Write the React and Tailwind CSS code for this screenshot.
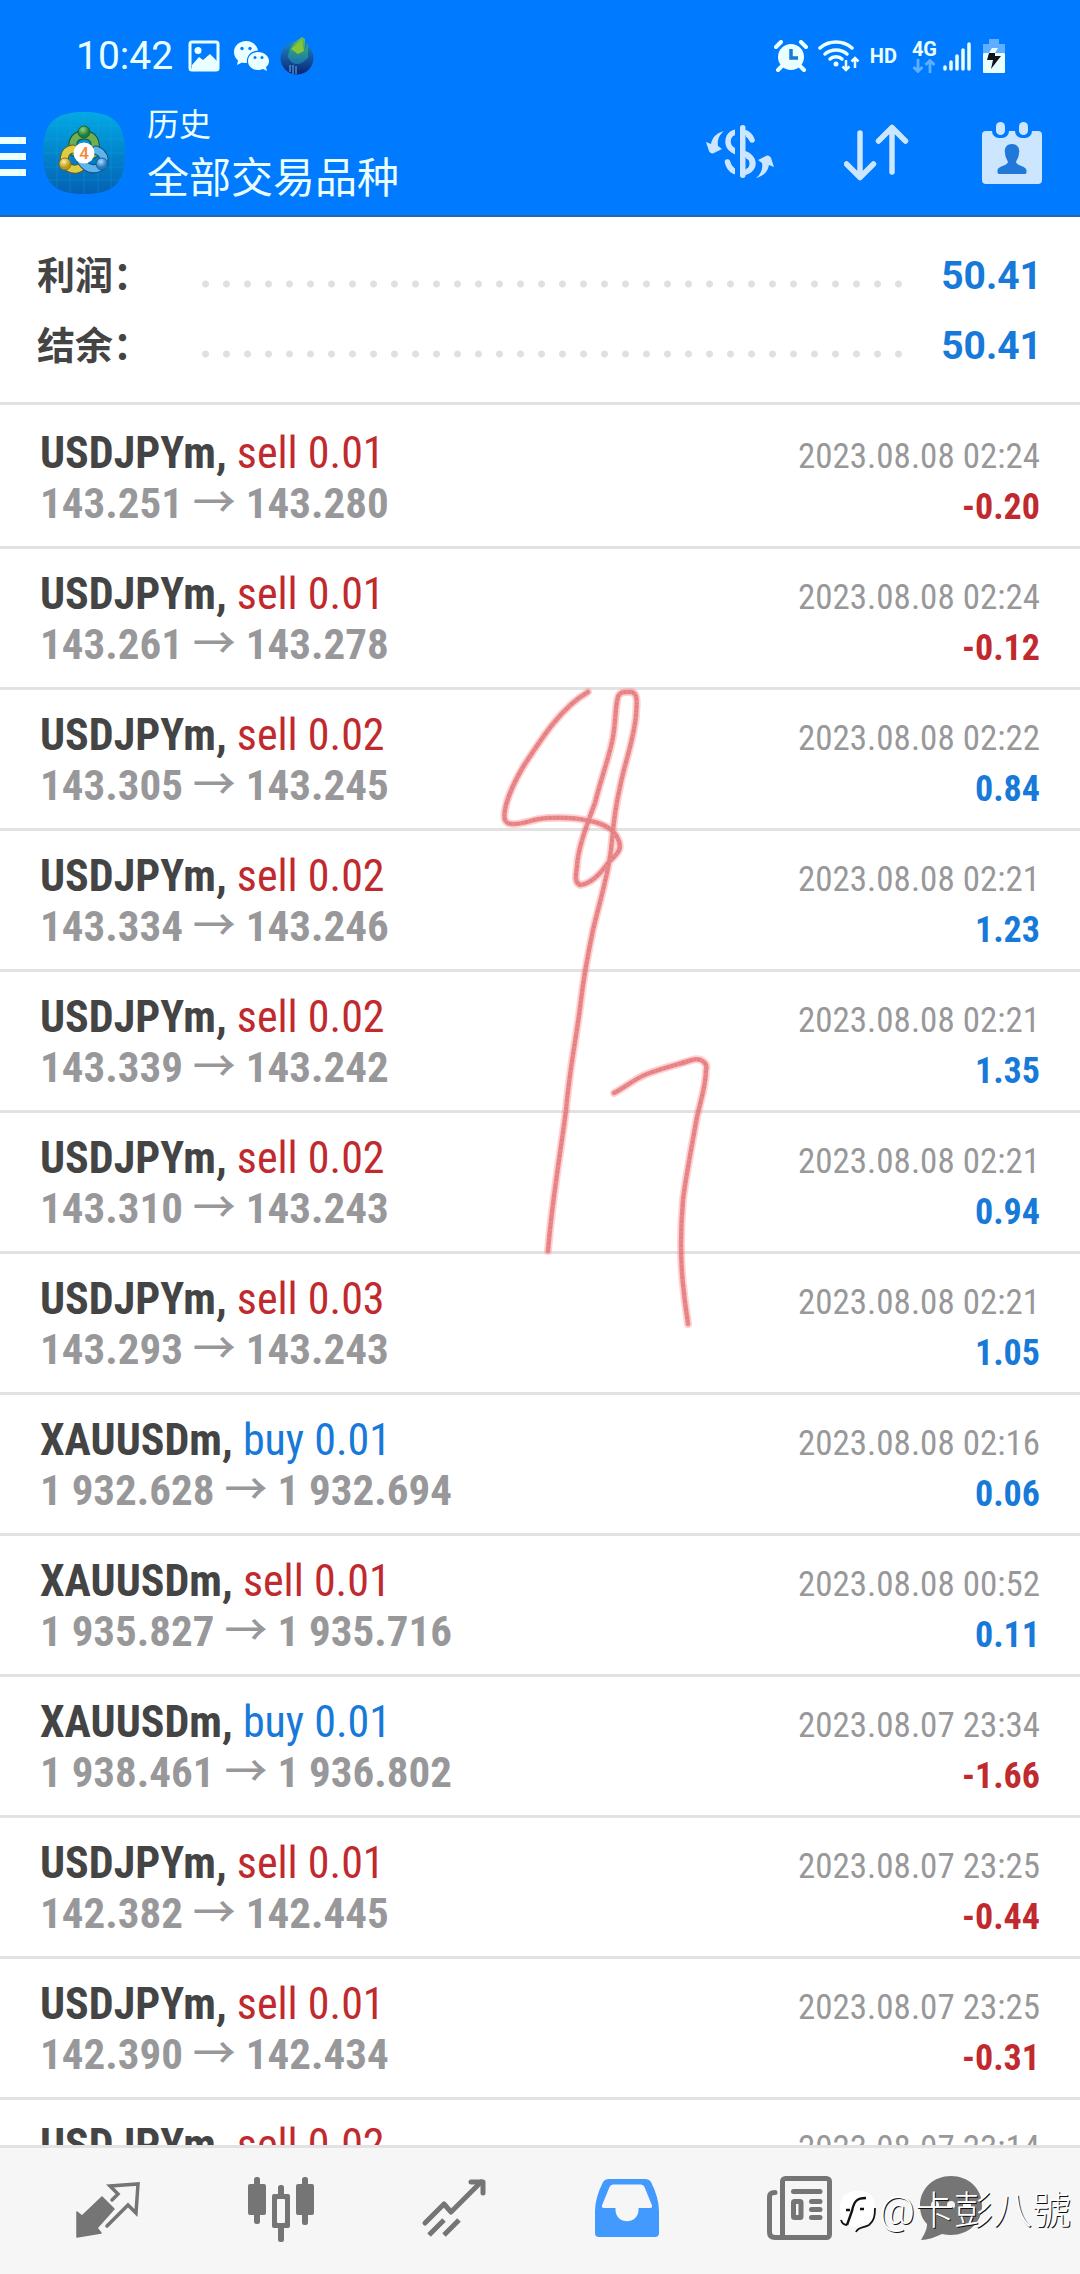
const deals = [
  { symbol: "USDJPYm", side: "sell", lots: "0.01", open: "143.251", close: "143.280", time: "2023.08.08 02:24", profit: "-0.20" },
  { symbol: "USDJPYm", side: "sell", lots: "0.01", open: "143.261", close: "143.278", time: "2023.08.08 02:24", profit: "-0.12" },
  { symbol: "USDJPYm", side: "sell", lots: "0.02", open: "143.305", close: "143.245", time: "2023.08.08 02:22", profit: "0.84" },
  { symbol: "USDJPYm", side: "sell", lots: "0.02", open: "143.334", close: "143.246", time: "2023.08.08 02:21", profit: "1.23" },
  { symbol: "USDJPYm", side: "sell", lots: "0.02", open: "143.339", close: "143.242", time: "2023.08.08 02:21", profit: "1.35" },
  { symbol: "USDJPYm", side: "sell", lots: "0.02", open: "143.310", close: "143.243", time: "2023.08.08 02:21", profit: "0.94" },
  { symbol: "USDJPYm", side: "sell", lots: "0.03", open: "143.293", close: "143.243", time: "2023.08.08 02:21", profit: "1.05" },
  { symbol: "XAUUSDm", side: "buy", lots: "0.01", open: "1 932.628", close: "1 932.694", time: "2023.08.08 02:16", profit: "0.06" },
  { symbol: "XAUUSDm", side: "sell", lots: "0.01", open: "1 935.827", close: "1 935.716", time: "2023.08.08 00:52", profit: "0.11" },
  { symbol: "XAUUSDm", side: "buy", lots: "0.01", open: "1 938.461", close: "1 936.802", time: "2023.08.07 23:34", profit: "-1.66" },
  { symbol: "USDJPYm", side: "sell", lots: "0.01", open: "142.382", close: "142.445", time: "2023.08.07 23:25", profit: "-0.44" },
  { symbol: "USDJPYm", side: "sell", lots: "0.01", open: "142.390", close: "142.434", time: "2023.08.07 23:25", profit: "-0.31" },
  { symbol: "USDJPYm", side: "sell", lots: "0.02", time: "2023.08.07 23:14" },
];

const totals = [
  { label: "利润：", value: "50.41" },
  { label: "结余：", value: "50.41" },
];

function StatusBar() {
  return (
    <div className="flex h-10 items-center pl-[76px] pr-[75px] text-[#eaffff]">
      <span className="text-[39px] leading-10">10:42</span>
      <svg className="ml-[15px] h-8 w-8" viewBox="0 0 32 32">
        <rect x="2" y="2" width="28" height="28" rx="2" fill="none" stroke="currentColor" strokeWidth="3" />
        <circle cx="10" cy="10.500" r="3.500" fill="currentColor" />
        <path d="M4 25 L11 17 L15 20 L22 14 L29 21 V29 H4Z" fill="currentColor" />
      </svg>
      <svg className="ml-[13px] h-8 w-9" viewBox="0 0 36 32">
        <path d="M13 1 C6 1 1 6 1 12 C1 16 3 19 5 20.500 L4 25 L9 22.500 C10 23 12 23 14 23 C13 16 18 10.500 25 10.500 C24 5 19 1 13 1Z" fill="currentColor" />
        <path d="M25 12 C19 12 15 16 15 21 C15 26 19 30 25 30 C27 30 28.500 29.500 30 29 L34 31 L33 27 C35 25.500 36 23.500 36 21 C36 16 31 12 25 12Z" fill="currentColor" />
        <g fill="#007aff">
          <circle cx="9" cy="8.500" r="1.700" />
          <circle cx="17" cy="8.500" r="1.700" />
          <circle cx="22" cy="17.500" r="1.500" />
          <circle cx="29" cy="17.500" r="1.500" />
        </g>
      </svg>
      <svg className="ml-[10px] h-[38px] w-9" viewBox="0 0 36 38">
        <defs>
          <linearGradient id="globe" x1="0" y1="0" x2="0" y2="1">
            <stop offset="0" stopColor="#1c8dc0" />
            <stop offset="0.5" stopColor="#15569f" />
            <stop offset="1" stopColor="#0a2472" />
          </linearGradient>
          <linearGradient id="leaf" x1="0" y1="0" x2="0" y2="1">
            <stop offset="0" stopColor="#6fbf4a" />
            <stop offset="0.5" stopColor="#2a9a88" />
            <stop offset="1" stopColor="#1b6fb0" />
          </linearGradient>
        </defs>
        <circle cx="18" cy="21" r="16.500" fill="url(#globe)" />
        <path d="M23 0 C15 5 10 10 9 20 C12 27 18 29 24 25 L29 21 V6 L26 13 V2Z" fill="url(#leaf)" />
        <path d="M23 2 L12 12 L19 17 L25 14Z" fill="#85c536" />
        <path d="M11 28 V35 M14 28 V37 M17 29 V37" stroke="#6cb3ee" strokeWidth="1" />
      </svg>

      <svg className="ml-auto h-8 w-[34px]" viewBox="0 0 34 32">
        <circle cx="17" cy="17" r="13" fill="currentColor" />
        <path d="M2 7 L7 2 M32 7 L27 2" stroke="currentColor" strokeWidth="4" strokeLinecap="round" />
        <path d="M8 26 L4 30 M26 26 L30 30" stroke="currentColor" strokeWidth="4" strokeLinecap="round" />
        <path d="M17 9 V18 H24" fill="none" stroke="#1779d8" strokeWidth="3.500" />
      </svg>
      <svg className="ml-[10px] h-8 w-[42px]" viewBox="0 0 42 32">
        <g fill="none" stroke="currentColor" strokeWidth="3.500" strokeLinecap="round">
          <path d="M2 8 C11 0 25 0 34 8" />
          <path d="M7 14 C13 8.500 23 8.500 29 14" />
          <path d="M12 19 C15 16 21 16 24 19" />
        </g>
        <circle cx="18" cy="24" r="2.500" fill="currentColor" />
        <path d="M28 20 V30 M24.500 26.500 L28 30 L31.500 26.500 M37 28 V18 M33.500 21.500 L37 18 L40.500 21.500" fill="none" stroke="currentColor" strokeWidth="2.500" />
      </svg>
      <span className="ml-[10px] text-xl font-bold">HD</span>
      <div className="ml-[15px] flex flex-col items-center">
        <span className="text-xl leading-5 font-bold">4G</span>
        <svg className="h-3.5 w-6" viewBox="0 0 24 14">
          <path d="M6 0 V12 M1.500 8 L6 12.500 L10.500 8 M18 14 V2 M13.500 6 L18 1.500 L22.500 6" fill="none" stroke="#5cb0ff" strokeWidth="2.800" />
        </svg>
      </div>
      <svg className="ml-[5px] h-8 w-[30px]" viewBox="0 0 30 32">
        <path d="M3 27 V29 M9 22 V29 M15 16 V29 M21 10 V29 M27 4 V29" stroke="currentColor" strokeWidth="3.500" strokeLinecap="round" />
      </svg>
      <svg className="ml-[11px] h-[34px] w-[22px]" viewBox="0 0 22 34">
        <path d="M6 0 H16 V5 H22 V14 H0 V5 H6Z" fill="#61adff" />
        <rect y="14" width="22" height="20" rx="1" fill="currentColor" />
        <path d="M9 9 H15 L12 14 H6Z" fill="currentColor" />
        <path d="M6 14 H12 V17 H18 L8 30 L10 21 H4Z" fill="#10141c" />
      </svg>
    </div>
  );
}

function AppLogo() {
  return (
    <svg className="mb-1.5 ml-[17px] size-[82px] shrink-0" viewBox="0 0 82 82">
      <defs>
        <linearGradient id="tile" x1="0" y1="0" x2="0" y2="1">
          <stop offset="0" stopColor="#03a9e4" />
          <stop offset="0.5" stopColor="#0285cc" />
          <stop offset="1" stopColor="#0560b4" />
        </linearGradient>
        <radialGradient id="green" cx="0.4" cy="0.3"><stop offset="0" stopColor="#8fd67a" /><stop offset="1" stopColor="#1f7d3a" /></radialGradient>
        <radialGradient id="yellow" cx="0.4" cy="0.3"><stop offset="0" stopColor="#fff2a0" /><stop offset="1" stopColor="#b99a1c" /></radialGradient>
        <radialGradient id="blue" cx="0.4" cy="0.3"><stop offset="0" stopColor="#a8e0ff" /><stop offset="1" stopColor="#2179c0" /></radialGradient>
      </defs>
      <path d="M41 0 C70 0 82 10 82 41 C82 72 70 82 41 82 C12 82 0 72 0 41 C0 10 12 0 41 0Z" fill="url(#tile)" />
      <path d="M14 6 V76 M27 2 V80 M41 0 V82 M55 2 V80 M68 6 V76 M4 14 H78 M1 27 H81 M0 41 H82 M1 55 H81 M4 68 H78" stroke="#25b4e8" strokeOpacity="0.25" strokeWidth="1" />
      <g strokeLinecap="round" fill="none">
        <path d="M31 40 C27 27 34 23 41 23 C49 23 55 28 51 42" stroke="#13532e" strokeWidth="9" />
        <path d="M31 40 C27 27 34 23 41 23 C49 23 55 28 51 42" stroke="#6fae52" strokeWidth="7" />
        <path d="M30 37 C20 38 19 51 25 55 C31 59 37 57 40 53" stroke="#625d1b" strokeWidth="9" />
        <path d="M30 37 C20 38 19 51 25 55 C31 59 37 57 40 53" stroke="#dfcc45" strokeWidth="7" />
        <path d="M53 38 C63 42 63 52 57 55 C49 59 43 56 38 49" stroke="#125187" strokeWidth="9" />
        <path d="M53 38 C63 42 63 52 57 55 C49 59 43 56 38 49" stroke="#5eb5ea" strokeWidth="7" />
      </g>
      <circle cx="41" cy="20" r="6" fill="url(#green)" stroke="#14552b" strokeWidth="0.800" />
      <circle cx="22" cy="52" r="6" fill="url(#yellow)" stroke="#75651a" strokeWidth="0.800" />
      <circle cx="59" cy="52" r="6" fill="url(#blue)" stroke="#155287" strokeWidth="0.800" />
      <circle cx="41" cy="41" r="10.500" fill="#fff" />
      <text x="41" y="47" textAnchor="middle" fontSize="17" fontWeight="500" fill="#ef8a3c">4</text>
    </svg>
  );
}

function Header() {
  return (
    <header className="border-b-2 border-[#2468b0] bg-[#007aff] pt-9 pb-[5px]">
      <StatusBar />
      <div className="mt-[26px] flex items-center pr-[38px]">
        <button type="button" aria-label="菜单" className="flex w-[26px] shrink-0 flex-col gap-[9px]">
          <span className="h-[7px] bg-[#eaffff]" />
          <span className="h-[7px] bg-[#eaffff]" />
          <span className="h-[7px] bg-[#eaffff]" />
        </button>
        <AppLogo />
        <div className="ml-[22px] text-[#eaffff]">
          <p className="text-[32px] leading-[46px]">历史</p>
          <h1 className="text-[42px] leading-[62px]">全部交易品种</h1>
        </div>
        <div className="mb-1.5 ml-auto flex items-center gap-[70px] text-[#cde6ff]">
          <button type="button" aria-label="交易品种">
            <svg className="h-[60px] w-[68px]" viewBox="706 124 68 60">
              <path d="M752 141 C749 134 743 133 738 133 C731 133 728 138 728 143 C728 150 735 153 742 155 C750 157 753 160 753 164 C753 170 748 173.500 741 173.500 C733 173.500 729 169 727.500 163" fill="none" stroke="currentColor" strokeWidth="5.500" strokeLinecap="round" />
              <rect x="735" y="126" width="11" height="54" fill="#007aff" />
              <rect x="740" y="126" width="5.500" height="53" rx="2.700" fill="currentColor" />
              <path d="M745 131 C748 131 752 134 754 139 C755 142 752 144 750 142 C748 139 747 137 745 136Z" fill="currentColor" />
              <path d="M745 152 C758 155 758 173 745 176 V171 C751 169 751 160 745 158Z" fill="currentColor" />
              <path d="M724 132 C716 134 712 139 711 145 L706 143 L709 152 C710 154 712 155 714 154 L722 150 L718 147 C717 141 719 136 724 132Z" fill="currentColor" />
              <path d="M756 179 C764 177 768 172 769 166 L774 168 L771 159 C770 157 768 156 766 157 L758 161 L762 164 C763 170 761 175 756 179Z" fill="currentColor" />
            </svg>
          </button>
          <button type="button" aria-label="排序">
            <svg className="h-[60px] w-[68px]" viewBox="844 124 68 60">
              <path d="M860 134 V178 M846.500 165 L860 178.500 L873.500 165 M892 173 V129 M878.500 142 L892 128.500 L905.500 142" fill="none" stroke="currentColor" strokeWidth="5.500" strokeLinecap="round" strokeLinejoin="round" />
            </svg>
          </button>
          <button type="button" aria-label="日期">
            <svg className="h-[62px] w-[60px]" viewBox="982 122 60 62">
              <rect x="982" y="131" width="60" height="53" rx="4" fill="currentColor" />
              <rect x="992" y="119" width="17" height="19" rx="7" fill="#007aff" />
              <rect x="1015" y="119" width="17" height="19" rx="7" fill="#007aff" />
              <rect x="996" y="122" width="9" height="13" rx="4.500" fill="currentColor" />
              <rect x="1019" y="122" width="9" height="13" rx="4.500" fill="currentColor" />
              <path d="M1012 144 C1006 144 1004 149 1005 153 C1005 157 1007 159 1008 162 C1007 166 998 166 997.500 170 V172 C997.500 173.500 998 174 1000 174 H1024 C1026 174 1026.500 173.500 1026.500 172 V170 C1026 166 1017 166 1016 162 C1017 159 1019 157 1019 153 C1020 149 1018 144 1012 144Z" fill="#2079d8" />
            </svg>
          </button>
        </div>
      </div>
    </header>
  );
}

function Totals() {
  return (
    <dl className="border-b-[3px] border-[#e2e2e2] pt-6 pb-[21px]">
      {totals.map((t) => (
        <div key={t.label} className="flex h-[70px] items-center pr-[38px] pl-[37px]">
          <dt className="text-[38px] font-bold text-[#444]">{t.label}</dt>
          <span className="mt-4 mr-8 ml-11 h-2 flex-1 bg-[radial-gradient(circle,#e0e0e0_3px,transparent_4px)] bg-[length:21px_8px] bg-repeat-x" />
          <dd className="text-[39px] font-bold text-[#1779d8]">{t.value}</dd>
        </div>
      ))}
    </dl>
  );
}

function Deal({ deal }) {
  return (
    <li className="flex justify-between border-b-[3px] border-[#e2e2e2] px-10 pt-5 pb-[14px] font-['Roboto_Condensed','Noto_Sans_CJK_SC',sans-serif] leading-[50px] whitespace-nowrap">
      <div>
        <p className="text-[44px]">
          <span className="font-bold text-[#444]">{deal.symbol},</span>{" "}
          <span className={deal.side === "buy" ? "text-[#1779d8]" : "text-[#c02a2e]"}>
            {deal.side} {deal.lots}
          </span>
        </p>
        {deal.open && (
          <p className="text-[43px] font-bold text-[#98989a]">
            {deal.open} <span className="font-['Noto_Sans_CJK_SC',sans-serif] leading-none font-medium">→</span> {deal.close}
          </p>
        )}
      </div>
      <div className="mt-1 text-right">
        <p className="text-[35px] text-[#98989a]">{deal.time}</p>
        {deal.profit && (
          <p className={deal.profit.startsWith("-") ? "text-[36px] font-bold text-[#c02a2e]" : "text-[36px] font-bold text-[#1779d8]"}>
            {deal.profit}
          </p>
        )}
      </div>
    </li>
  );
}

// Pen marks drawn over the deals
function PenMarks() {
  const strokes = [
    "M588 692 C562 707 543 736 523 767 C512 786 507 798 505 810 C503 821 506 824 513 824 C525 824 532 819 547 818 C566 817 578 818 590 821 C605 824 613 829 617 837 C624 849 617 854 608 863 C599 876 589 884 580 885 C574 882 576 875 577 866 C578 850 584 832 595 803 C602 775 610 755 613 737 C616 720 615 707 618 697 C620 691 626 692 631 692 C638 693 637 702 636 715 C634 740 624 765 620 787 C614 812 613 830 611 850 C607 880 600 900 593 930 C587 959 583 983 581 1000 C577 1035 570 1065 566 1110 C561 1150 552 1200 548 1251",
    "M614 1093 C626 1087 634 1079 647 1074 C662 1068 680 1064 692 1060 C702 1057 708 1064 706 1070 C706 1085 701 1099 697 1117 C692 1145 686 1175 683 1200 C680 1235 681 1270 684 1293 C685 1305 687 1315 688 1324",
  ];
  return (
    <svg className="pointer-events-none absolute top-[281px] left-[500px] h-[650px] w-[220px]" viewBox="500 686 220 650" fill="none" strokeLinecap="round">
      {strokes.map((d) => (
        <g key={d}>
          <path d={d} stroke="#ff7c7c" strokeOpacity="0.35" strokeWidth="8" />
          <path d={d} stroke="#ea7478" strokeOpacity="0.8" strokeWidth="4.500" />
          <path d={d} stroke="#b98085" strokeOpacity="0.5" strokeWidth="3" strokeDasharray="1 2 2 3" strokeLinecap="butt" />
        </g>
      ))}
    </svg>
  );
}

function TabBar() {
  return (
    <nav className="relative flex shrink-0 items-center border-t-[3px] border-[#e2e2e2] bg-[#f6f6f6] pt-7 pr-[65px] pb-8 pl-[21px] text-[#757575]">
      <button type="button" aria-label="行情" className="flex flex-[173] justify-center">
        <svg className="size-[66px]" viewBox="-1 0 66 66">
          <path d="M1 36 L6 40 L26 21 L38 33 L21 52 L25 57 L1 61Z" fill="currentColor" stroke="currentColor" strokeWidth="1.500" strokeLinejoin="round" />
          <path d="M36 24 L42 18 L34 10 L62 8 L60 37 L52 29 L31 50" fill="none" stroke="currentColor" strokeWidth="3.500" strokeLinecap="round" />
        </svg>
      </button>
      <button type="button" aria-label="图表" className="flex flex-[173] justify-center">
        <svg className="size-[66px]" viewBox="0 0 66 66" fill="currentColor">
          <rect x="6" y="1" width="6" height="47" rx="2.500" />
          <rect x="0" y="8" width="18" height="31" rx="2" />
          <rect x="54" y="1" width="6" height="48" rx="2.500" />
          <rect x="48" y="8" width="18" height="31" rx="2" />
          <rect x="30" y="9" width="6" height="12" rx="2.500" />
          <rect x="30" y="48" width="6" height="18" rx="2.500" />
          <path fillRule="evenodd" d="M26 18 H40 Q42 18 42 20 V50 Q42 52 40 52 H26 Q24 52 24 50 V20 Q24 18 26 18Z M30 23 Q29 23 29 24 V46 Q29 47 30 47 H36 Q37 47 37 46 V24 Q37 23 36 23Z" />
        </svg>
      </button>
      <button type="button" aria-label="交易" className="flex flex-[173] justify-center">
        <svg className="size-[66px]" viewBox="0 -2 66 66" fill="none" stroke="currentColor" strokeWidth="5" strokeLinecap="round" strokeLinejoin="round">
          <path d="M4 45 L23 26 L30 34 L60 4" />
          <path d="M50 4 H62 V15" />
          <path d="M8 57 L23 42 M23 57 L38 42" strokeLinecap="butt" />
        </svg>
      </button>
      <button type="button" aria-label="历史" className="flex flex-[173] justify-center text-[#429aff]">
        <svg className="size-[66px]" viewBox="-1 -2 66 66">
          <path fillRule="evenodd" fill="currentColor" d="M14 1 H50 Q54 1 56 4 Q64 20 64 33 V55 Q64 59 60 59 H4 Q0 59 0 55 V33 Q0 20 8 4 Q10 1 14 1Z M18 6.500 Q15.500 6.500 14.500 9 L7 27.500 Q6.500 30 9 30 H20.500 V32 C21 47 43 47 43.500 32 V30 H55 Q57.500 30 57 27.500 L49.500 9 Q48.500 6.500 46 6.500Z" />
        </svg>
      </button>
      <button type="button" aria-label="新闻" className="flex flex-[173] justify-center">
        <svg className="size-[66px]" viewBox="0 0 66 66">
          <g fill="none" stroke="currentColor" strokeWidth="5" strokeLinecap="round">
            <rect x="15.500" y="2.500" width="47" height="59" rx="3" />
            <path d="M8 16.500 C4 16.500 2.500 18 2.500 21 V56 Q2.500 61.500 8 61.500 H16" />
            <path d="M26.500 15.500 H53 M44.500 25.500 H53 M44.500 33.500 H53 M44.500 41.500 H53" />
            <rect x="26.500" y="25.500" width="7.500" height="16" rx="1" />
          </g>
        </svg>
      </button>
      <button type="button" aria-label="邮箱" className="flex flex-[128] justify-center">
        <svg className="size-[66px]" viewBox="-2 0 66 66">
          <path d="M31 0 C48 0 62 12 62 29.500 C62 47 48 59 31 59 C28 59 25 58.500 22 58 C15 61 8 64 1 64 C5 57 7 53 7 48 C2 43 0 37 0 29.500 C0 12 14 0 31 0Z" fill="currentColor" />
          <g fill="#f6f6f6"><circle cx="15" cy="29" r="4" /><circle cx="31" cy="29" r="4" /><circle cx="47" cy="29" r="4" /></g>
        </svg>
      </button>

      <div className="pointer-events-none absolute top-[38px] right-[9px] flex items-center text-white">
        <svg className="h-11 w-10" viewBox="0 0 40 44">
          <path d="M18 2 C32 0 37 8 37 20 C37 30 33 37 24 38 C8 40 2 32 2 20 C2 8 6 3 18 2Z" fill="#fff" />
          <path d="M8 21 H12 M9 36 L14 22 C16 12 19 9 28 9 M22 20 H26" fill="none" stroke="#111" strokeWidth="2.400" />
          <path d="M18 43 C20 38 26 39 31 36 C36 32 37 27 37 19 M3 31 C4 34 6 36 9 36" fill="none" stroke="#111" strokeWidth="1.800" />
        </svg>
        <span className="ml-px text-[39px] leading-[50px] font-light text-shadow-[1px_1px_0_#111]">@卡彭八號</span>
      </div>
    </nav>
  );
}

export default function App() {
  return (
    <div className="flex h-screen flex-col bg-white font-[Roboto,'Noto_Sans_CJK_SC',sans-serif]">
      <Header />
      <Totals />
      <main className="relative min-h-0 flex-1 overflow-hidden pt-[3px]">
        <ul>
          {deals.map((deal, i) => (
            <Deal key={i} deal={deal} />
          ))}
        </ul>
        <PenMarks />
      </main>
      <TabBar />
    </div>
  );
}
